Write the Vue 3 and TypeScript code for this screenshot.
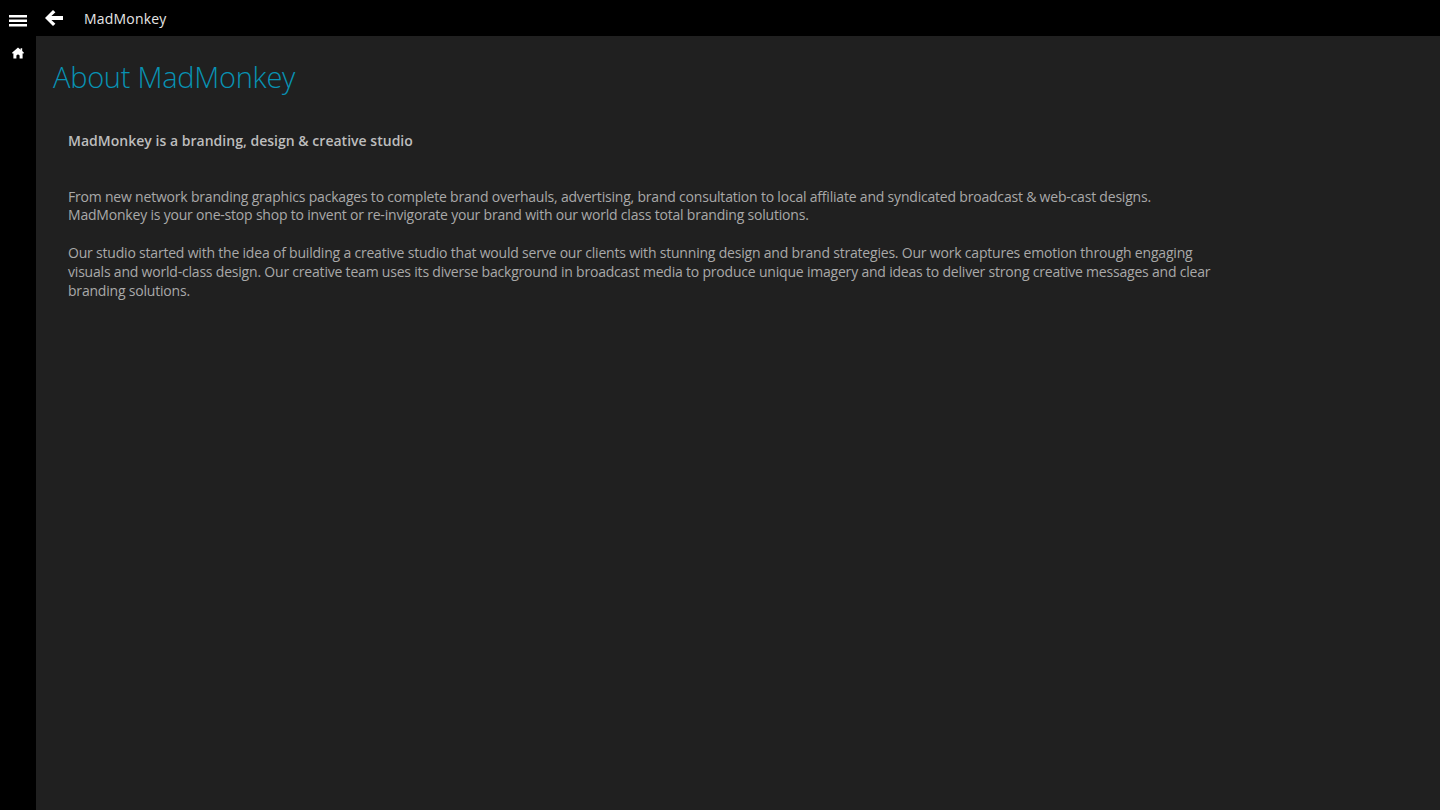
<template>
  <div class="app">
    <header class="topbar">
      <button type="button" class="menu-btn" aria-label="Menu">
        <svg width="18" height="12" viewBox="0 0 18 12" fill="#fff">
          <rect y="0" width="18" height="2.5" />
          <rect y="4.5" width="18" height="2.5" />
          <rect y="9" width="18" height="2.5" />
        </svg>
      </button>
      <button type="button" class="back-btn" aria-label="Back">
        <svg width="18" height="16" viewBox="0 0 18 16" fill="#fff">
          <path d="M8 0 L10.4 2.2 L6.4 6 H18 V10 H6.4 L10.4 13.8 L8 16 L0 8 Z" />
        </svg>
      </button>
      <span class="app-title">{{ appName }}</span>
    </header>
    <div class="body">
      <nav class="sidebar">
        <svg width="12" height="12" viewBox="0 0 12 12" fill="#fff">
          <path d="M6 0.4 L8.6 2.7 V1.2 H10.2 V4.1 L12 5.8 L11.2 6.7 L10.6 6.2 V11.6 H7.6 V8.4 Q6 6.8 4.4 8.4 V11.6 H1.4 V6.2 L0.8 6.7 L0 5.8 Z" />
        </svg>
      </nav>
      <main class="content">
        <h1>About {{ appName }}</h1>
        <div class="text">
          <p class="lead">{{ lead }}</p>
          <p v-for="(para, index) in paragraphs" :key="index">{{ para }}</p>
        </div>
      </main>
    </div>
  </div>
</template>

<script setup lang="ts">
const appName = 'MadMonkey'
const lead = 'MadMonkey is a branding, design & creative studio'
const paragraphs: string[] = [
  'From new network branding graphics packages to complete brand overhauls, advertising, brand consultation to local affiliate and syndicated broadcast & web-cast designs.\nMadMonkey is your one-stop shop to invent or re-invigorate your brand with our world class total branding solutions.',
  'Our studio started with the idea of building a creative studio that would serve our clients with stunning design and brand strategies. Our work captures emotion through engaging visuals and world-class design. Our creative team uses its diverse background in broadcast media to produce unique imagery and ideas to deliver strong creative messages and clear branding solutions.'
]
</script>

<style>
html, body {
  margin: 0;
  background: #000;
}
</style>

<style scoped>
.app {
  width: 1440px;
  height: 810px;
  display: flex;
  flex-direction: column;
  overflow: hidden;
  background: #000;
  font-family: "Open Sans", "Noto Sans", sans-serif;
}
.topbar {
  height: 36px;
  flex: none;
  display: flex;
  align-items: center;
}
button {
  background: none;
  border: 0;
  padding: 0;
  display: flex;
}
.menu-btn {
  width: 36px;
  height: 36px;
  justify-content: center;
  padding-top: 15px;
  box-sizing: border-box;
}
.back-btn {
  width: 36px;
  justify-content: center;
  margin-top: -1px;
}
.app-title {
  margin-left: 12px;
  margin-top: 1px;
  color: #e6e6e6;
  font-size: 14px;
  letter-spacing: 0.2px;
}
.body {
  flex: 1;
  display: flex;
  min-height: 0;
}
.sidebar {
  width: 36px;
  flex: none;
  display: flex;
  justify-content: center;
  padding-top: 11px;
  box-sizing: border-box;
}
.content {
  flex: 1;
  background: #202020;
  padding: 19px 0 0 17px;
}
h1 {
  margin: 0;
  height: 44px;
  font-size: 29px;
  line-height: 44px;
  font-weight: 300;
  letter-spacing: -0.27px;
  color: #0892b3;
}
.text {
  width: 1160px;
  margin: 33px 0 0 15px;
  color: #a9a9a9;
  font-size: 14px;
  line-height: 18.7px;
  letter-spacing: -0.2px;
  white-space: pre-line;
}
p {
  margin: 0 0 19px;
}
.text .lead {
  font-weight: 600;
  color: #bdbdbd;
  letter-spacing: 0.02px;
  margin-bottom: 37px;
}
</style>
